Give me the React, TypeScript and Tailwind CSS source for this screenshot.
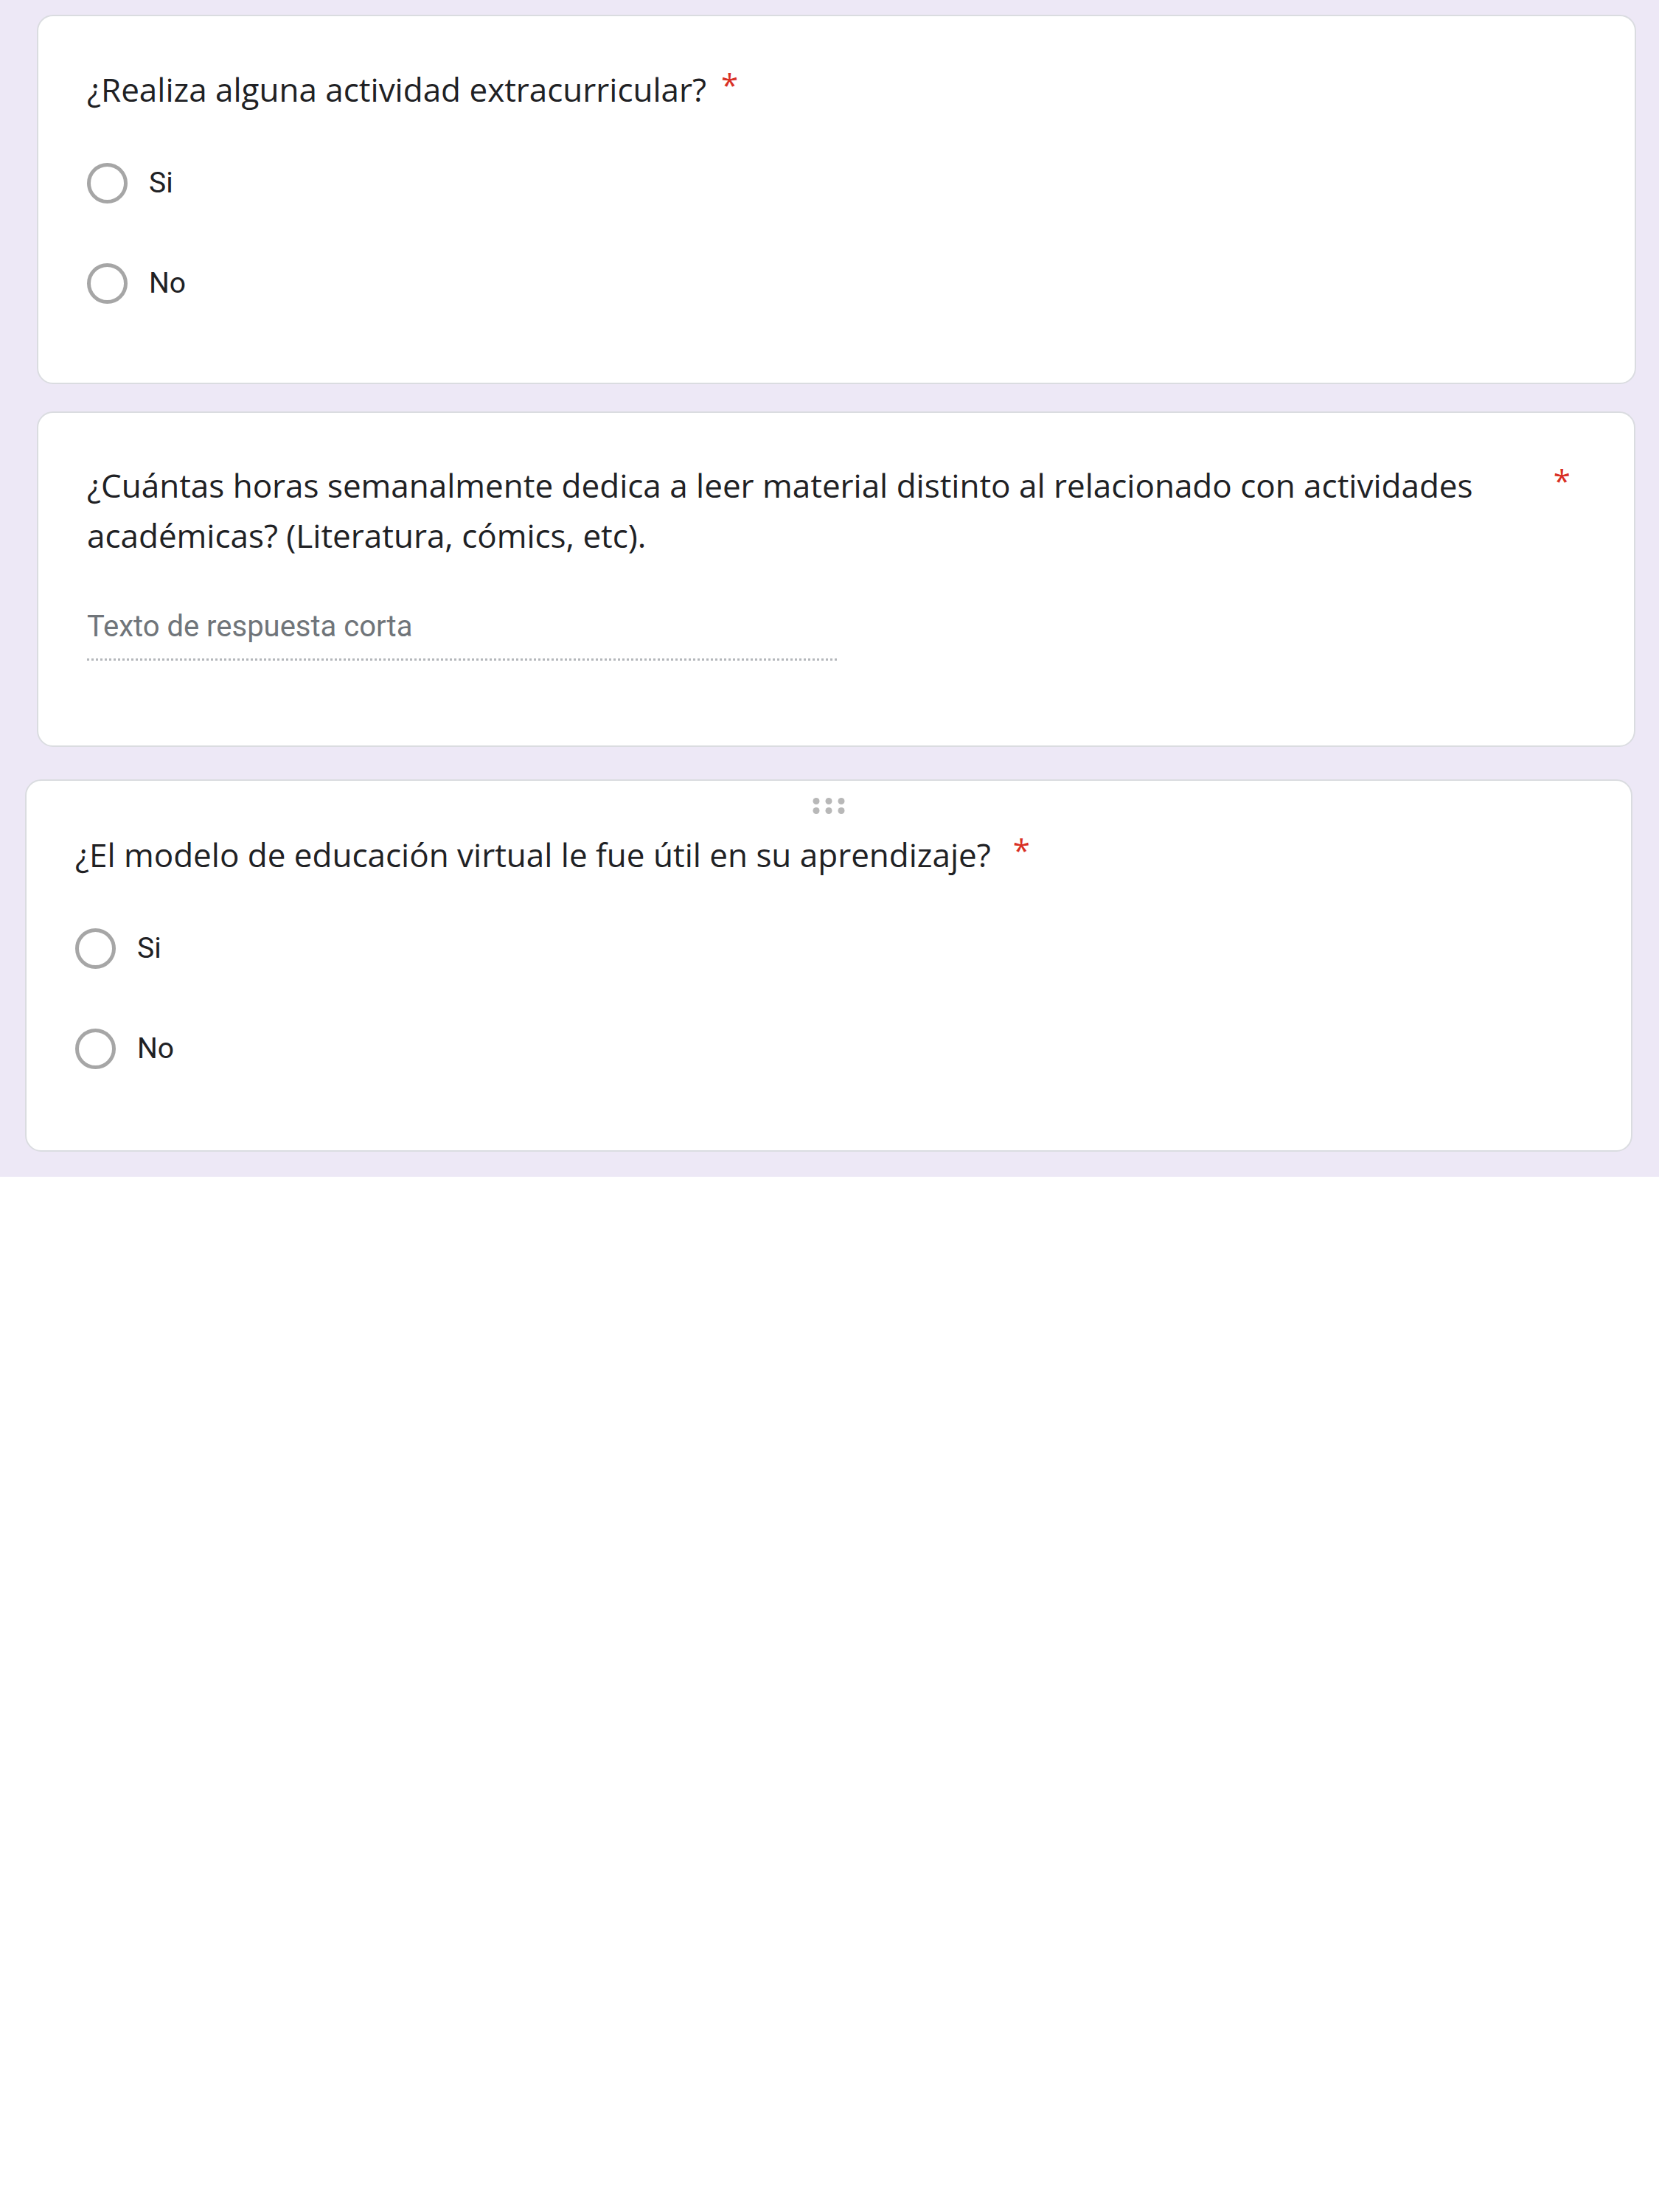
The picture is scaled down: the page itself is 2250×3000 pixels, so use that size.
import React from "react";

const Radio = ({ label }: { label: string }) => (
  <div className="flex items-center h-[136px]">
    <span className="w-[55px] h-[55px] rounded-full border-[5px] border-[#a6a6a6] shrink-0" />
    <span className="ml-[29px] text-[39px] leading-[56px] text-[#202124] font-['Roboto',sans-serif]">
      {label}
    </span>
  </div>
);

const Star = () => (
  <span className="block -mt-[6px] text-[42px] leading-[68px] text-[#d93025] font-['Open_Sans',sans-serif] shrink-0">
    *
  </span>
);

export default function App() {
  return (
    <div className="w-[2250px] min-h-[3000px] bg-white">
      <div className="bg-[#ede8f6] pt-[20px] pb-[34px]">
        {/* pregunta 1 */}
        <div className="ml-[50px] w-[2169px] bg-white border-2 border-[#dadce0] rounded-[22px] pt-[65px] pb-[67px] pl-[66px]">
          <div className="flex items-start">
            <p className="text-[44px] leading-[68px] text-[#202124] font-['Open_Sans',sans-serif]">
              ¿Realiza alguna actividad extracurricular?
            </p>
            <span className="ml-[20px]">
              <Star />
            </span>
          </div>
          <div className="mt-[25px]">
            <Radio label="Si" />
            <Radio label="No" />
          </div>
        </div>

        {/* pregunta 2 */}
        <div className="mt-[37px] ml-[50px] w-[2168px] bg-white border-2 border-[#dadce0] rounded-[22px] pt-[64px] pb-[115px] pl-[66px] pr-[86px]">
          <div className="flex items-start justify-between">
            <p className="text-[44px] leading-[68px] text-[#202124] font-['Open_Sans',sans-serif]">
              ¿Cuántas horas semanalmente dedica a leer material distinto al relacionado con actividades
              <br />
              académicas? (Literatura, cómics, etc).
            </p>
            <Star />
          </div>
          <div className="mt-[62px] w-[1017px] border-b-[3px] border-dotted border-[#b4b7bb] pb-[15px]">
            <span className="text-[40px] leading-[56px] text-[#70757a] font-['Roboto',sans-serif]">
              Texto de respuesta corta
            </span>
          </div>
        </div>

        {/* pregunta 3 */}
        <div className="relative mt-[44px] ml-[34px] w-[2180px] bg-white border-2 border-[#dadce0] rounded-[22px] pt-[66px] pb-[70px] pl-[66px]">
          <div className="absolute top-[23px] left-1/2 -translate-x-1/2 grid grid-cols-3 gap-x-[8px] gap-y-[4px]">
            {[0, 1, 2, 3, 4, 5].map((i) => (
              <span key={i} className="w-[9px] h-[9px] rounded-full bg-[#b8b8b8]" />
            ))}
          </div>
          <div className="flex items-start">
            <p className="text-[44px] leading-[68px] text-[#202124] font-['Open_Sans',sans-serif]">
              ¿El modelo de educación virtual le fue útil en su aprendizaje?
            </p>
            <span className="ml-[30px]">
              <Star />
            </span>
          </div>
          <div className="mt-[25px]">
            <Radio label="Si" />
            <Radio label="No" />
          </div>
        </div>
      </div>
    </div>
  );
}
